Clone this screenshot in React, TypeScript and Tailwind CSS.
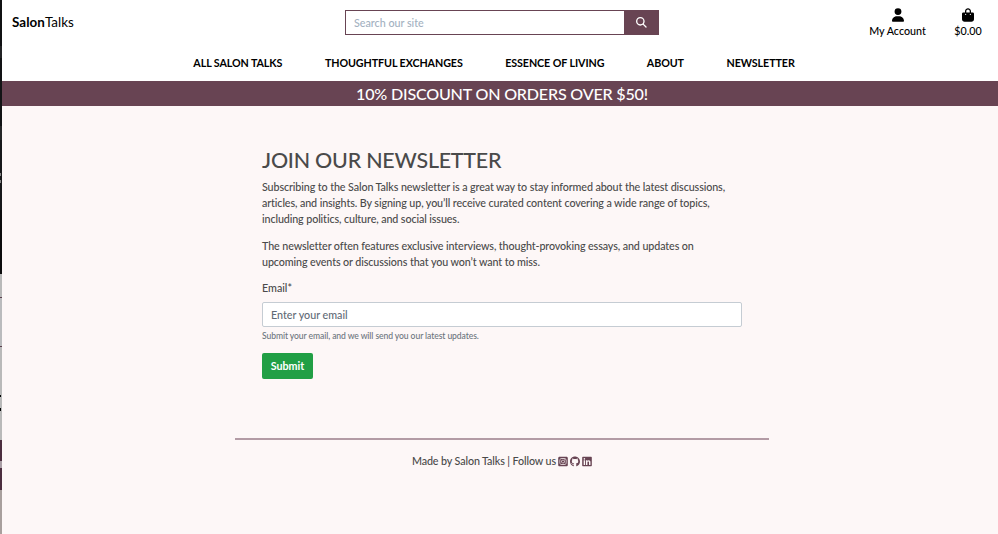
import {
  FaBagShopping,
  FaGithub,
  FaLinkedin,
  FaMagnifyingGlass,
  FaSquareInstagram,
  FaUser,
} from "react-icons/fa6";

const links = ["ALL SALON TALKS", "THOUGHTFUL EXCHANGES", "ESSENCE OF LIVING", "ABOUT", "NEWSLETTER"];

// Sliver of the window that sits behind the page's left edge.
function EdgeStrip() {
  return (
    <div className="flex w-[2px] shrink-0 flex-col bg-[#b9b9b9]">
      <div className="h-[46px] bg-[#101113]" />
      <div className="h-[12px] bg-[#222325]" />
      <div className="h-[68px] bg-[#121315]" />
      <div className="h-[14px] bg-[#252627]" />
      <div className="flex h-[70px] flex-col bg-[#17181a] pt-[33px]">
        <div className="h-[3px] w-px bg-[#858585]" />
        <div className="mt-[4px] h-[3px] w-px bg-[#858585]" />
      </div>
      <div className="h-[64px] bg-[#0c0c0d]" />
      <div className="h-[23px]" />
      <div className="h-px bg-[#5a3f4d]" />
      <div className="h-[48px] bg-[#babbbd]" />
      <div className="h-px bg-[#5a3f4d]" />
      <div className="h-[48px]" />
      <div className="h-[2px] w-px bg-black" />
      <div className="h-[11px]" />
      <div className="h-[3px] w-px bg-black" />
      <div className="h-[29px]" />
      <div className="h-[21px] bg-[#4c2e3f]" />
      <div className="h-[7px] bg-[#a99ea5]" />
      <div className="h-[22px] bg-[#4c2e3f]" />
      <div className="flex-1 bg-[#a89f9d]" />
    </div>
  );
}

export default function App() {
  return (
    <div className="flex h-[534px] w-[998px] overflow-hidden bg-[#fdf7f7] font-['Lato',sans-serif] text-[10.72px] font-medium leading-[16px] text-[#4a4a4a]">
      <EdgeStrip />
      <div className="flex min-w-0 flex-1 flex-col">
        <header className="h-[81px] bg-white text-black">
          <div className="flex h-[45px] items-start">
            <a className="w-[343px] pl-[10px] pt-[13px] text-[13.4px] font-normal leading-[18px] tracking-[0.05px]">
              <span className="font-bold">Salon</span>Talks
            </a>
            <form className="mt-[10px] flex h-[25px] w-[314px]">
              <input
                className="min-w-0 flex-1 border border-[#684453] bg-white px-[8px] pt-px outline-none placeholder:text-[#a3b1bf]"
                placeholder="Search our site"
              />
              <button type="button" className="flex w-[34px] items-center justify-center bg-[#684453] pr-px text-white">
                <FaMagnifyingGlass size={10.7} />
              </button>
            </form>
            <div className="ml-auto flex pr-[16px] pt-[8px]">
              <a className="flex w-[58px] flex-col items-center whitespace-nowrap pr-px">
                <FaUser className="h-[14px] w-[12px]" />
                <span className="mt-px">My Account</span>
              </a>
              <a className="ml-[27px] flex w-[28px] flex-col items-center">
                <FaBagShopping className="h-[14px] w-[12px]" />
                <span className="mt-px">$0.00</span>
              </a>
            </div>
          </div>
          <nav className="flex justify-center gap-[42.5px] pr-[12px] pt-[10px] font-bold tracking-[-0.09px]">
            {links.map((l) => (
              <a key={l}>{l}</a>
            ))}
          </nav>
        </header>
        <div className="h-[25px] bg-[#684453] pl-[4px] text-center text-[16.1px] leading-[26px] tracking-[-0.2px] text-white">
          10% DISCOUNT ON ORDERS OVER $50!
        </div>
        <main className="ml-[260px] w-[480px] pt-[41px]">
          <h1 className="text-[21.44px] font-medium leading-[26px] tracking-[-0.22px]">JOIN OUR NEWSLETTER</h1>
          <div className="whitespace-nowrap tracking-[-0.1px]">
            <p className="mt-[6px]">
              Subscribing to the Salon Talks newsletter is a great way to stay informed about the latest discussions,
              <br />
              articles, and insights. By signing up, you’ll receive curated content covering a wide range of topics,
              <br />
              including politics, culture, and social issues.
            </p>
            <p className="mt-[11px]">
              The newsletter often features exclusive interviews, thought-provoking essays, and updates on
              <br />
              upcoming events or discussions that you won’t want to miss.
            </p>
          </div>
          <label className="mt-[10px] block">Email*</label>
          <input
            className="mt-[6px] block h-[25px] w-full rounded-[2px] border border-[#c5ccd3] bg-white px-[8px] outline-none placeholder:text-[#5f6b76]"
            placeholder="Enter your email"
          />
          <small className="mt-[3px] block text-[8.58px] leading-[13px] tracking-[-0.085px] text-[#6c757d]">
            Submit your email, and we will send you our latest updates.
          </small>
          <button type="button" className="mt-[10px] block h-[26px] w-[51px] rounded-[2px] bg-[#219f45] font-bold text-white">
            Submit
          </button>
        </main>
        <footer className="ml-[233px] mt-[59px] w-[534px] border-t-2 border-[#b39ba5] pt-[13px]">
          <div className="flex items-center justify-center whitespace-nowrap tracking-[-0.11px]">
            Made by Salon Talks | Follow us
            <span className="ml-[2px] flex gap-[2px] text-[#684453]">
              <FaSquareInstagram className="h-[11px] w-[10px]" />
              <FaGithub className="h-[11px] w-[10px]" />
              <FaLinkedin className="h-[11px] w-[10px]" />
            </span>
          </div>
        </footer>
      </div>
    </div>
  );
}
